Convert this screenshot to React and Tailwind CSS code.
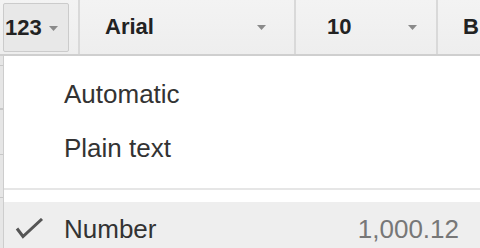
import React from "react";

function Caret({ className = "" }) {
  return (
    <svg width="9" height="5" viewBox="0 0 9 5" className={className}>
      <polygon points="0,0 9,0 4.5,5" fill="#8a8a8a" />
    </svg>
  );
}

export default function App() {
  return (
    <div
      className="w-[480px] h-[248px] overflow-hidden bg-white flex flex-col"
      style={{ fontFamily: '"Liberation Sans", Arial, sans-serif' }}
    >
      {/* toolbar */}
      <div className="h-[56px] shrink-0 flex items-stretch bg-gradient-to-b from-[#f3f3f3] to-[#eeeeee] border-b-2 border-[#cfcfcf] text-[22px] font-bold text-[#222]">
        <div className="pl-[3px] pt-[3px] pb-[2px] flex">
          <div className="w-[66px] h-[49px] rounded-[2px] border border-[#cbcbcb] bg-[#e8e8e8] flex items-center pl-[1px]">
            <span className="leading-none">123</span>
            <Caret className="ml-[7px] mt-[1px]" />
          </div>
        </div>
        <div className="w-[9px]" />
        <div className="w-[2px] bg-[#d9d9d9]" />
        <div className="w-[214px] flex items-center pl-[25px]">
          <span className="leading-none">Arial</span>
          <Caret className="ml-[103px] mt-[1px]" />
        </div>
        <div className="w-[2px] bg-[#d9d9d9]" />
        <div className="w-[140px] flex items-center pl-[31px]">
          <span className="leading-none">10</span>
          <Caret className="ml-[57px] mt-[1px]" />
        </div>
        <div className="w-[2px] bg-[#d9d9d9]" />
        <div className="flex items-center pl-[25px]">
          <span className="leading-none">B</span>
        </div>
      </div>

      {/* body */}
      <div className="flex flex-1 min-h-0">
        <div className="w-[3px] shrink-0 bg-[#e6e6e6] flex flex-col">
          <div className="h-[9px]" />
          <div className="h-[1px] bg-[#c8c8c8]" />
          <div className="h-[42px]" />
          <div className="h-[2px] bg-[#c8c8c8]" />
          <div className="h-[44px]" />
          <div className="h-[1px] bg-[#c8c8c8]" />
          <div className="h-[42px]" />
          <div className="h-[1px] bg-[#c8c8c8]" />
        </div>
        <div className="flex-1 border-l border-[#cdcdcd] bg-white flex flex-col text-[26px] text-[#333] pt-[12px]">
          <div className="h-[53px] shrink-0 flex items-center pl-[60px]">
            <span className="leading-normal">Automatic</span>
          </div>
          <div className="h-[54px] shrink-0 flex items-center pl-[60px]">
            <span className="leading-normal">Plain text</span>
          </div>
          <div className="h-[13px] shrink-0" />
          <div className="h-[2px] shrink-0 bg-[#e6e6e6]" />
          <div className="h-[12px] shrink-0" />
          <div className="h-[54px] shrink-0 flex items-center bg-[#eeeeee]">
            <div className="w-[60px] shrink-0 flex items-center">
              <svg width="30" height="24" viewBox="0 0 30 24" className="ml-[11px] mt-[1px]">
                <polyline
                  points="2,10.5 8,18.5 27,1"
                  fill="none"
                  stroke="#555"
                  strokeWidth="3"
                  strokeLinejoin="miter"
                />
              </svg>
            </div>
            <span className="leading-normal">Number</span>
            <span className="ml-auto mr-[21px] leading-normal text-[#777]">1,000.12</span>
          </div>
        </div>
      </div>
    </div>
  );
}
